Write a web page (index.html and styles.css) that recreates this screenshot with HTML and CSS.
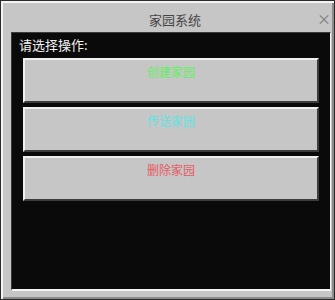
FILE: index.html
```html
<!DOCTYPE html>
<html lang="zh">
<head>
  <meta charset="UTF-8">
  <meta name="viewport" content="width=device-width, initial-scale=1.0">
  <title>家园系统</title>
  <link rel="stylesheet" href="styles.css">
</head>
<body>
  <div class="window">
    <div class="title-bar">
      <span class="title">家园系统</span>
      <span class="close">×</span>
    </div>
    <div class="panel">
      <div class="prompt">请选择操作:</div>
      <div class="buttons">
        <button class="button green">创建家园</button>
        <button class="button aqua">传送家园</button>
        <button class="button red">删除家园</button>
      </div>
    </div>
  </div>
</body>
</html>
```

FILE: styles.css
```css
body {
  margin: 0;
  padding: 0;
  font-family: "Noto Sans CJK SC", "Noto Sans", sans-serif;
  background: #1a1a1a;
}
.window {
  width: 335px;
  height: 300px;
  box-sizing: border-box;
  background: #c6c6c6;
  border: 1px solid #2b2b2b;
  box-shadow: inset 2px 2px 0 #f4f4f4, inset -2px -2px 0 #8b8b8b;
  display: flex;
  flex-direction: column;
  padding: 0 3px 8px 10px;
}
.title-bar {
  height: 31px;
  box-sizing: border-box;
  padding-top: 5px;
  display: flex;
  align-items: center;
  justify-content: center;
  position: relative;
}
.title {
  font-size: 13px;
  color: #454545;
  margin-left: 8px;
}
.close {
  position: absolute;
  right: 0;
  top: 10px;
  font-size: 14px;
  line-height: 14px;
  color: #7c7c7c;
}
.panel {
  flex: 1;
  background: #0b0a0b;
  border-top: 1px solid #3a3a3a;
  border-left: 1px solid #3a3a3a;
  border-right: 1px solid #f4f4f4;
  border-bottom: 2px solid #f4f4f4;
  padding: 3px 11px 0 11px;
}
.prompt {
  color: #f2f2f2;
  font-size: 13px;
  line-height: 17px;
  margin-left: -4px;
}
.buttons {
  display: flex;
  flex-direction: column;
  gap: 4px;
  margin-top: 5px;
}
.button {
  height: 45px;
  box-sizing: border-box;
  background: #c6c6c6;
  border: 2px solid;
  border-color: #f0f0f0 #3c3c3c #3c3c3c #f0f0f0;
  font-family: inherit;
  font-size: 12px;
  line-height: 16px;
  padding: 4px 0 0 0;
  text-align: center;
  display: flex;
  justify-content: center;
  align-items: flex-start;
}
.green {
  color: #62f05e;
}
.aqua {
  color: #5fe3e3;
}
.red {
  color: #e85a63;
}
```
